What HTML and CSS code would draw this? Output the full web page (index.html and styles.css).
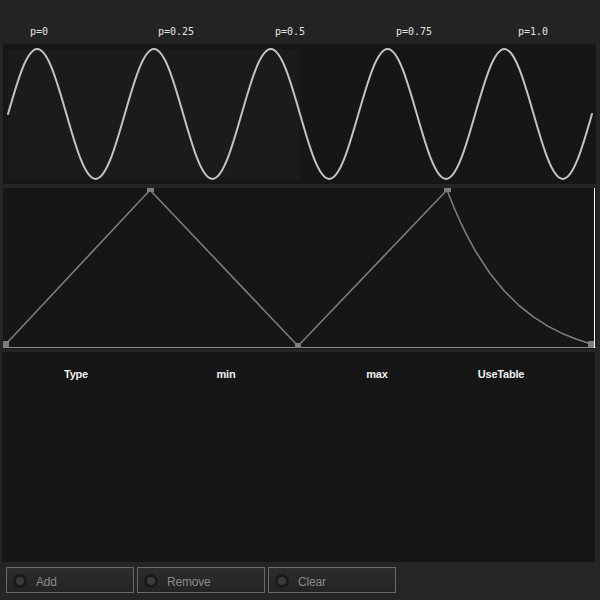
FILE: index.html
```html
<!DOCTYPE html>
<html>
<head>
<meta charset="utf-8">
<link rel="stylesheet" href="styles.css">
</head>
<body>
<div class="app">
  <div class="labels">
    <span class="lbl l0">p=0</span>
    <span class="lbl l1">p=0.25</span>
    <span class="lbl l2">p=0.5</span>
    <span class="lbl l3">p=0.75</span>
    <span class="lbl l4">p=1.0</span>
  </div>
  <div class="wave">
    <svg width="593" height="140" viewBox="0 0 593 140">
      <rect x="5" y="5" width="292" height="130" fill="#1b1b1b"/>
      <path fill="none" stroke="#c4c4c4" stroke-width="2" stroke-linecap="round" d="M5 70
        c9.52-33.3 18.63-65 29.2-65 c10.57 0 19.68 31.7 29.2 65 c9.52 33.3 18.63 65 29.2 65 c10.57 0 19.68-31.7 29.2-65
        c9.52-33.3 18.63-65 29.2-65 c10.57 0 19.68 31.7 29.2 65 c9.52 33.3 18.63 65 29.2 65 c10.57 0 19.68-31.7 29.2-65
        c9.52-33.3 18.63-65 29.2-65 c10.57 0 19.68 31.7 29.2 65 c9.52 33.3 18.63 65 29.2 65 c10.57 0 19.68-31.7 29.2-65
        c9.52-33.3 18.63-65 29.2-65 c10.57 0 19.68 31.7 29.2 65 c9.52 33.3 18.63 65 29.2 65 c10.57 0 19.68-31.7 29.2-65
        c9.52-33.3 18.63-65 29.2-65 c10.57 0 19.68 31.7 29.2 65 c9.52 33.3 18.63 65 29.2 65 c10.57 0 19.68-31.7 29.2-65"/>
    </svg>
  </div>
  <div class="env">
    <svg width="593" height="161" viewBox="0 0 593 161">
      <line x1="0" y1="159.5" x2="593" y2="159.5" stroke="#8c8c8c" stroke-width="1"/>
      <polyline fill="none" stroke="#7c7c7c" stroke-width="1.6" stroke-linejoin="round"
        points="3,156 147,2 295,158 444,2 451.2,20 458.4,36.2 465.6,50.7 472.8,63.7 487.2,85.7 501.6,103.3 516,117.5 530.4,128.9 544.8,138.1 559.2,145.4 573.6,151.3 588,156"/>
      <line x1="591.5" y1="0" x2="591.5" y2="160" stroke="#ffffff" stroke-width="1"/>
      <g fill="#7e7e7e">
        <rect x="0" y="153" width="6" height="6"/>
        <rect x="144" y="0" width="7" height="4"/>
        <rect x="292" y="155" width="6" height="5"/>
        <rect x="441" y="0" width="7" height="4"/>
        <rect x="585" y="153" width="6" height="6"/>
      </g>
    </svg>
  </div>
  <div class="table">
    <div class="thead">
      <span>Type</span>
      <span>min</span>
      <span>max</span>
      <span>UseTable</span>
    </div>
  </div>
  <div class="buttons">
    <div class="btn"><span class="radio"></span><span class="btxt">Add</span></div>
    <div class="btn"><span class="radio"></span><span class="btxt">Remove</span></div>
    <div class="btn"><span class="radio"></span><span class="btxt">Clear</span></div>
  </div>
</div>
</body>
</html>
```

FILE: styles.css
```css
html, body {
  margin: 0;
  padding: 0;
  background: #252525;
  width: 600px;
  height: 600px;
  overflow: hidden;
}
.app {
  display: flex;
  flex-direction: column;
  width: 600px;
  height: 600px;
}
.labels {
  position: relative;
  height: 44px;
  background: #232323;
  flex: none;
}
.lbl {
  position: absolute;
  top: 25px;
  font-family: "DejaVu Sans Mono", monospace;
  font-size: 10px;
  line-height: 14px;
  color: #e2e2e2;
}
.l0 { left: 30px; }
.l1 { left: 158px; }
.l2 { left: 275px; }
.l3 { left: 396px; }
.l4 { left: 518px; }
.wave {
  margin-left: 3px;
  width: 593px;
  height: 140px;
  background: #161616;
  flex: none;
}
.wave svg, .env svg { display: block; }
.env {
  margin-top: 4px;
  margin-left: 3px;
  width: 593px;
  height: 161px;
  background: #161616;
  flex: none;
}
.table {
  margin-top: 3px;
  margin-left: 2px;
  width: 593px;
  height: 210px;
  background: #161616;
  flex: none;
}
.thead {
  display: grid;
  grid-template-columns: 148px 152px 150px 98px 1fr;
  padding-top: 15px;
  font-family: "Liberation Sans", Arial, sans-serif;
  font-weight: bold;
  font-size: 11px;
  letter-spacing: -0.2px;
  color: #f0f0f0;
  line-height: 14px;
}
.thead span { text-align: center; }
.buttons {
  display: flex;
  gap: 3px;
  padding: 5px 6px 0 6px;
}
.btn {
  box-sizing: border-box;
  width: 128px;
  height: 26px;
  border: 1px solid #6a6a6a;
  background: linear-gradient(#2d2d2d, #232323);
  display: flex;
  align-items: center;
}
.radio {
  box-sizing: border-box;
  width: 14px;
  height: 14px;
  margin-left: 6px;
  margin-top: 1px;
  border-radius: 50%;
  background: #3b3b3b;
  border: 3px solid #1a1a1a;
  flex: none;
}
.btxt {
  margin-left: 9px;
  padding-top: 3px;
  font-family: "Liberation Sans", Arial, sans-serif;
  font-size: 12px;
  letter-spacing: -0.2px;
  color: #8a8a8a;
}
```
